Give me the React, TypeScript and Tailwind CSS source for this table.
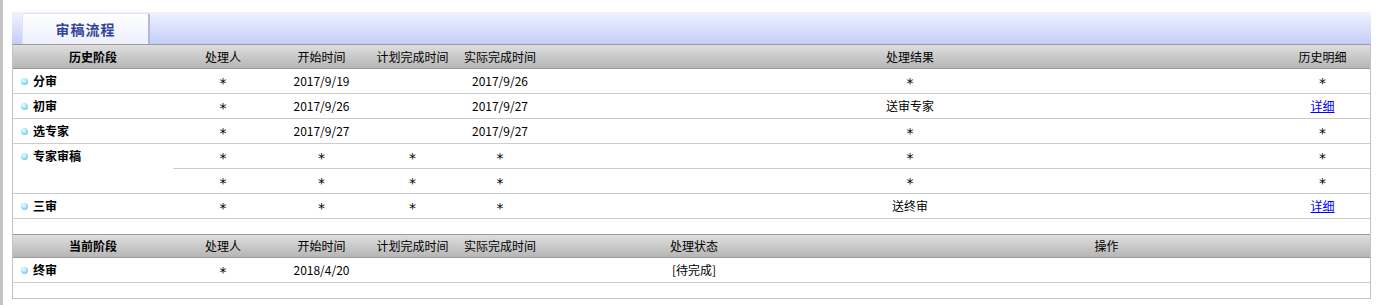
import React from "react";

type Cell = string | { link: string };

interface HistoryRow {
  stage: string;
  cells: Cell[][];
}

const COLS_1 = "grid grid-cols-[160px_100px_97px_85px_90px_730px_95px]";
const COLS_1_RIGHT = "grid grid-cols-[100px_97px_85px_90px_730px_95px]";
const COLS_2 = "grid grid-cols-[160px_100px_97px_85px_90px_298px_527px]";

const HEAD_1 = ["处理人", "开始时间", "计划完成时间", "实际完成时间", "处理结果", "历史明细"];
const HEAD_2 = ["处理人", "开始时间", "计划完成时间", "实际完成时间", "处理状态", "操作"];

const HISTORY: HistoryRow[] = [
  { stage: "分审", cells: [["*", "2017/9/19", "", "2017/9/26", "*", "*"]] },
  { stage: "初审", cells: [["*", "2017/9/26", "", "2017/9/27", "送审专家", { link: "详细" }]] },
  { stage: "选专家", cells: [["*", "2017/9/27", "", "2017/9/27", "*", "*"]] },
  {
    stage: "专家审稿",
    cells: [
      ["*", "*", "*", "*", "*", "*"],
      ["*", "*", "*", "*", "*", "*"],
    ],
  },
  { stage: "三审", cells: [["*", "*", "*", "*", "送终审", { link: "详细" }]] },
];

function Dot() {
  return (
    <span className="inline-block w-[7px] h-[7px] rounded-full bg-[radial-gradient(circle_at_40%_35%,#f4fdff_0%,#a6e6fb_40%,#45b9ea_100%)]" />
  );
}

function Value({ v }: { v: Cell }) {
  if (typeof v !== "string") {
    return <a className="text-[#0000ff] underline cursor-pointer">{v.link}</a>;
  }
  if (v === "*")
    return <span className="pt-[3px] text-[14px] leading-[14px] font-['DejaVu_Sans',sans-serif]">*</span>;
  return <span>{v}</span>;
}

function HeaderRow({ cols, first, labels, h }: { cols: string; first: string; labels: string[]; h: string }) {
  return (
    <div
      className={`${cols} ${h} border-t border-b border-t-[#9c9c9c] border-b-[#9a9a9a] bg-gradient-to-b from-[#dedede] to-[#b6b6b6]`}
    >
      <div className="flex items-center justify-center font-bold">{first}</div>
      {labels.map((l) => (
        <div key={l} className="flex items-center justify-center">
          {l}
        </div>
      ))}
    </div>
  );
}

function StageLabel({ name }: { name: string }) {
  return (
    <div className="flex items-center gap-[5px] pl-[8px] font-bold h-[24px]">
      <Dot />
      <span>{name}</span>
    </div>
  );
}

export default function App() {
  return (
    <div className="flex min-h-[305px] bg-white text-black text-[12px] font-['Noto_Sans_CJK_SC','Noto_Sans',sans-serif]">
      <div className="w-[3px] bg-[#c4c4c4]" />
      <div className="ml-[9px] mt-[12px] w-[1359px]">
        {/* tab band */}
        <div className="h-[32px] flex items-end bg-gradient-to-b from-[#f1f3fe] to-[#c4ccf9]">
          <div className="ml-[10px] w-[128px] h-[31px] flex items-center justify-center bg-gradient-to-b from-white to-[#eceffc] border-l border-t border-[#dde1f3] border-r-2 border-r-[#b3b9d8] rounded-t-[2px]">
            <span className="text-[14px] font-bold tracking-[1px] text-[#33449a]">审稿流程</span>
          </div>
        </div>

        <div className="border-l border-r border-b border-[#c2c2c2]">
          <HeaderRow cols={COLS_1} first="历史阶段" labels={HEAD_1} h="h-[25px]" />

          {HISTORY.map((row) => (
            <div key={row.stage} className="flex border-b border-[#cccccc]">
              <div className="w-[160px] shrink-0">
                <StageLabel name={row.stage} />
              </div>
              <div className="flex-1">
                {row.cells.map((cells, i) => (
                  <div
                    key={i}
                    className={`${COLS_1_RIGHT} h-[24px] ${i < row.cells.length - 1 ? "h-[25px] border-b border-[#cccccc]" : ""}`}
                  >
                    {cells.map((c, j) => (
                      <div key={j} className="flex items-center justify-center">
                        <Value v={c} />
                      </div>
                    ))}
                  </div>
                ))}
              </div>
            </div>
          ))}

          <div className="h-[15px]" />

          <HeaderRow cols={COLS_2} first="当前阶段" labels={HEAD_2} h="h-[24px]" />

          <div className={`${COLS_2} h-[25px] border-b border-[#cccccc]`}>
            <StageLabel name="终审" />
            <div className="flex items-center justify-center">
              <Value v="*" />
            </div>
            <div className="flex items-center justify-center">2018/4/20</div>
            <div />
            <div />
            <div className="flex items-center justify-center">[待完成]</div>
            <div />
          </div>
          <div className="h-[15px]" />
        </div>
      </div>
    </div>
  );
}
